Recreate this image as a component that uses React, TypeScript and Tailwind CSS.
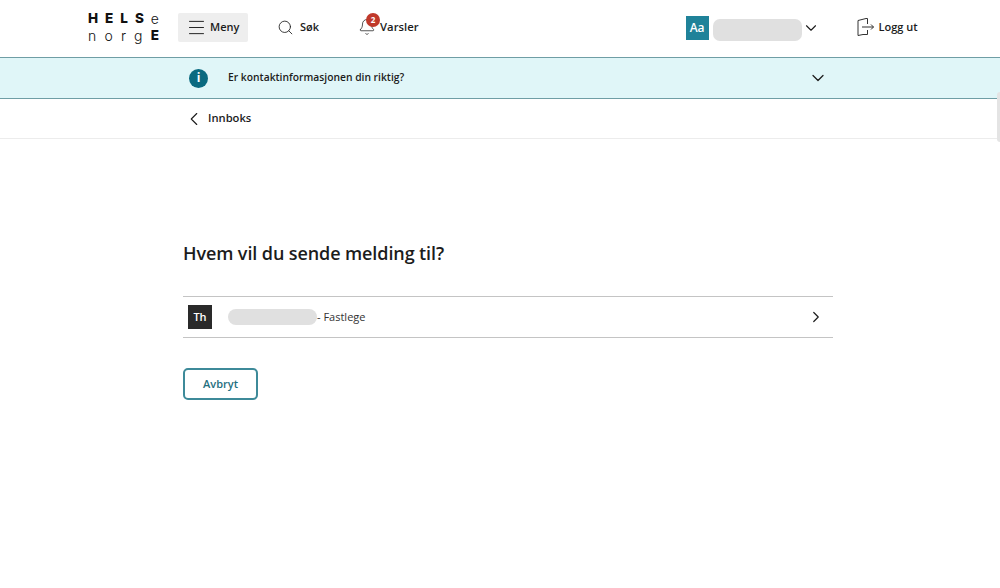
import { ChevronDown, ChevronLeft, ChevronRight, Menu, Search, Bell } from 'lucide-react';

const Logo = () => (
  <div className="w-[71px] font-['Inter',sans-serif] text-[13.5px] text-[#111]">
    <div className="flex h-[17px] items-center justify-between font-extrabold">
      <span>H</span>
      <span>E</span>
      <span>L</span>
      <span>S</span>
      <span className="text-[14px] font-light">e</span>
    </div>
    <div className="flex h-[17px] items-center justify-between text-[14px] font-light">
      <span>n</span>
      <span>o</span>
      <span>r</span>
      <span>g</span>
      <span className="text-[13.5px] font-extrabold">E</span>
    </div>
  </div>
);

const LogoutIcon = () => (
  <svg width="18" height="20" viewBox="0 0 18 20" fill="none" stroke="#333" strokeWidth="1" className="ml-[37px]">
    <path d="M1 3.5 L9 1.5 H10.5 V7 M10.5 13 V17.5 H6 M1 3.5 V18.5 L6 17.5 V17.5" />
    <path d="M5 10 H16.5 M14 7.5 L16.5 10 L14 12.5" />
  </svg>
);

export default function App() {
  return (
    <div className="relative h-[588px] w-[1000px] overflow-hidden bg-white font-['Open_Sans',sans-serif] text-[#1c1c1c]">
      <header className="flex h-[58px] items-center border-b border-[#6f9ea5] pb-[3px] pl-[88px]">
        <Logo />
        <button className="ml-[19px] mt-[1px] flex h-[29px] w-[70px] items-center gap-[3px] rounded-[2px] bg-[#eeeeee] pl-[8px] text-[11px] font-semibold">
          <Menu size={21} strokeWidth={1.1} />
          Meny
        </button>
        <div className="ml-[29px] flex items-center gap-[6px] text-[11px] font-semibold">
          <Search size={17} strokeWidth={1.2} />
          Søk
        </div>
        <div className="relative ml-[39px] flex items-center text-[11px] font-semibold">
          <Bell size={18} strokeWidth={1} />
          <span className="absolute left-[8px] top-[-5px] flex h-[14px] w-[14px] items-center justify-center rounded-full bg-[#c0392b] text-[8px] font-bold text-white">2</span>
          <span className="ml-[4px] text-[11.3px]">Varsler</span>
        </div>
        <div className="ml-[267px] mt-[1px] flex h-[24px] w-[23px] items-center justify-center bg-[#1f8299] text-[12px] font-semibold text-white">Aa</div>
        <div className="ml-[4px] mt-[5px] h-[22px] w-[89px] rounded-[7px] bg-[#e0e0e0]" />
        <ChevronDown className="mt-[1px]" size={18} strokeWidth={1.5} />
        <LogoutIcon />
        <span className="ml-[4px] text-[11px] font-semibold">Logg ut</span>
      </header>

      <div className="flex h-[41px] items-center border-b border-[#6f9ea5] bg-[#e0f6f8] pl-[189px]">
        <div className="flex h-[19px] w-[19px] items-center justify-center rounded-full bg-[#0a6a80] text-[12px] font-bold text-white">i</div>
        <span className="ml-[20px] w-[580px] text-[10.3px] font-semibold">Er kontaktinformasjonen din riktig?</span>
        <ChevronDown size={20} strokeWidth={1.5} />
      </div>

      <div className="flex h-[40px] items-center border-b border-[#ececec] pl-[183px] text-[11.2px] font-semibold">
        <ChevronLeft size={22} strokeWidth={1.2} />
        <span className="ml-[3px]">Innboks</span>
      </div>

      <main className="ml-[183px] w-[650px] pt-[100px]">
        <h1 className="text-[18px] leading-[28px] font-semibold tracking-[-0.1px]">Hvem vil du sende melding til?</h1>
        <div className="mt-[29px] flex h-[42px] items-center border-y border-[#c4c4c4] pl-[5px] pr-[8px]">
          <div className="flex h-[24px] w-[24px] items-center justify-center bg-[#2a2a2a] text-[11px] font-semibold text-white">Th</div>
          <div className="ml-[16px] h-[16px] w-[89px] rounded-[8px] bg-[#e0e0e0]" />
          <span className="text-[11px] text-[#333]">- Fastlege</span>
          <ChevronRight className="ml-auto" size={18} strokeWidth={1.6} />
        </div>
        <button className="mt-[30px] h-[32px] w-[75px] rounded-[5px] border-2 border-[#3d8a99] text-[11px] font-semibold text-[#1f6f80]">Avbryt</button>
      </main>

      <div className="absolute right-0 top-[92px] h-[50px] w-[3px] rounded-l bg-[#e4e4e4]" />
    </div>
  );
}
